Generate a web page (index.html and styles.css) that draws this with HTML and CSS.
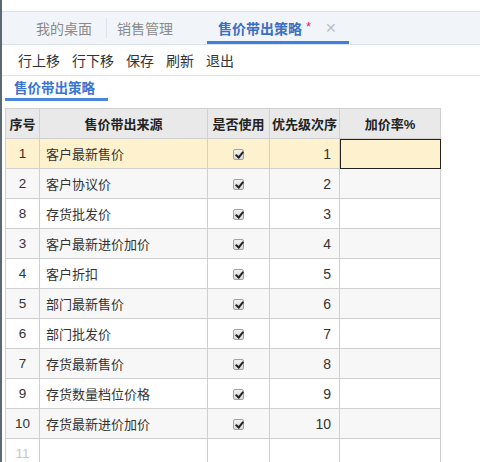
FILE: index.html
```html
<!DOCTYPE html>
<html lang="zh-CN">
<head>
<meta charset="utf-8">
<title>售价带出策略</title>
<link rel="stylesheet" href="styles.css">
</head>
<body>
<div class="page">
  <div class="topgap"></div>
  <div class="tabbar">
    <div class="tab tab-first">我的桌面</div>
    <div class="tab tab-second">销售管理</div>
    <div class="tab tab-active">售价带出策略<span class="star">*</span><span class="close">✕</span></div>
  </div>
  <div class="toolbar">
    <span class="tool">行上移</span>
    <span class="tool">行下移</span>
    <span class="tool">保存</span>
    <span class="tool">刷新</span>
    <span class="tool">退出</span>
  </div>
  <div class="subtabs">
    <div class="subtab">售价带出策略</div>
  </div>
  <table class="grid">
    <colgroup>
      <col class="c-no">
      <col class="c-src">
      <col class="c-use">
      <col class="c-pri">
      <col class="c-rate">
    </colgroup>
    <thead>
      <tr><th>序号</th><th>售价带出来源</th><th>是否使用</th><th>优先级次序</th><th>加价率%</th></tr>
    </thead>
    <tbody>
      <tr class="sel"><td class="no">1</td><td>客户最新售价</td><td class="chk"><span class="cb"></span></td><td class="num">1</td><td class="cur"></td></tr>
      <tr><td class="no">2</td><td>客户协议价</td><td class="chk"><span class="cb"></span></td><td class="num">2</td><td></td></tr>
      <tr><td class="no">8</td><td>存货批发价</td><td class="chk"><span class="cb"></span></td><td class="num">3</td><td></td></tr>
      <tr><td class="no">3</td><td>客户最新进价加价</td><td class="chk"><span class="cb"></span></td><td class="num">4</td><td></td></tr>
      <tr><td class="no">4</td><td>客户折扣</td><td class="chk"><span class="cb"></span></td><td class="num">5</td><td></td></tr>
      <tr><td class="no">5</td><td>部门最新售价</td><td class="chk"><span class="cb"></span></td><td class="num">6</td><td></td></tr>
      <tr><td class="no">6</td><td>部门批发价</td><td class="chk"><span class="cb"></span></td><td class="num">7</td><td></td></tr>
      <tr><td class="no">7</td><td>存货最新售价</td><td class="chk"><span class="cb"></span></td><td class="num">8</td><td></td></tr>
      <tr><td class="no">9</td><td>存货数量档位价格</td><td class="chk"><span class="cb"></span></td><td class="num">9</td><td></td></tr>
      <tr><td class="no">10</td><td>存货最新进价加价</td><td class="chk"><span class="cb"></span></td><td class="num">10</td><td></td></tr>
      <tr class="empty"><td class="no">11</td><td></td><td></td><td></td><td></td></tr>
    </tbody>
  </table>
</div>
</body>
</html>
```

FILE: styles.css
```css
html, body {
  margin: 0;
  padding: 0;
  background: #ffffff;
}
body {
  font-family: "Liberation Sans", "Noto Sans CJK SC", sans-serif;
  color: #333;
}
.page {
  height: 462px;
  overflow: hidden;
  border-left: 2px solid #5d6875;
  box-sizing: border-box;
}
.topgap {
  height: 11px;
}
.tabbar {
  display: flex;
  height: 32px;
  background: #f1f5fa;
  border-top: 1px solid #d9e1ea;
  border-bottom: 1px solid #d9e1ea;
}
.tab {
  display: flex;
  align-items: center;
  font-size: 14px;
  color: #8a8a8a;
  box-sizing: border-box;
  height: 32px;
  white-space: nowrap;
  flex-shrink: 0;
}
.tab-first {
  margin-left: 23px;
  padding: 0 14px 0 11px;
  border-right: 1px solid #dbe2ea;
  margin-top: 6px;
  margin-bottom: 6px;
  height: 20px;
}
.tab-second {
  padding: 0 34px 0 10px;
}
.tab-active {
  padding: 3px 12px 0 11px;
  color: #3a6fc4;
  font-weight: bold;
  border-bottom: 3px solid #3f80d8;
}
.star {
  color: #e0245e;
  font-weight: normal;
  margin-left: 4px;
  font-size: 13px;
  position: relative;
  top: -2px;
}
.close {
  color: #b8bec6;
  font-weight: normal;
  margin-left: 14px;
  font-size: 14px;
}
.toolbar {
  display: flex;
  gap: 12px;
  height: 30px;
  align-items: center;
  padding-left: 16px;
  border-bottom: 1px solid #e2e2e2;
  font-size: 14px;
  color: #333;
}
.subtabs {
  display: flex;
  padding-left: 3px;
}
.subtab {
  width: 103px;
  box-sizing: border-box;
  height: 25px;
  padding-left: 9px;
  display: flex;
  align-items: center;
  font-size: 13.5px;
  font-weight: bold;
  color: #3a74cf;
  border-bottom: 3px solid #4a86d9;
}
.grid {
  margin: 7px 0 0 3px;
  border-collapse: collapse;
  table-layout: fixed;
  width: 435px;
  font-size: 13px;
}
.c-no { width: 34px; }
.c-src { width: 168px; }
.c-use { width: 62px; }
.c-pri { width: 70px; }
.c-rate { width: 101px; }
.grid th, .grid td {
  border: 1px solid #d0d0d0;
  height: 30px;
  padding: 0;
  box-sizing: border-box;
  white-space: nowrap;
  overflow: hidden;
}
.grid th {
  background: #e9e9e9;
  color: #222;
  font-weight: bold;
  text-align: center;
}
.grid td {
  padding-left: 6px;
  color: #333;
}
.grid tbody tr:nth-child(even) td {
  background: #f7f7f7;
}
.grid tbody tr.sel td {
  background: #fdf2cd;
}
.grid td.no {
  text-align: center;
  padding-left: 0;
  font-size: 13.5px;
}
.grid td.num {
  text-align: right;
  padding-right: 8px;
  font-size: 14px;
}
.grid td.chk {
  text-align: center;
  padding-left: 0;
}
.grid td.cur {
  outline: 1px solid #222;
  outline-offset: -1px;
}
.grid tr.empty td {
  background: #fff;
}
.grid tr.empty td.no {
  color: #c8c8c8;
}
.cb {
  display: inline-block;
  width: 11px;
  height: 11px;
  border: 1px solid #a2a2a2;
  border-radius: 2px;
  background: linear-gradient(#f0f0f0, #d9d9d9);
  vertical-align: middle;
  position: relative;
  box-sizing: border-box;
}
.cb::after {
  content: "";
  position: absolute;
  left: 3px;
  top: 0px;
  width: 3px;
  height: 6px;
  border-right: 2px solid #222;
  border-bottom: 2px solid #222;
  transform: rotate(40deg);
}
```
